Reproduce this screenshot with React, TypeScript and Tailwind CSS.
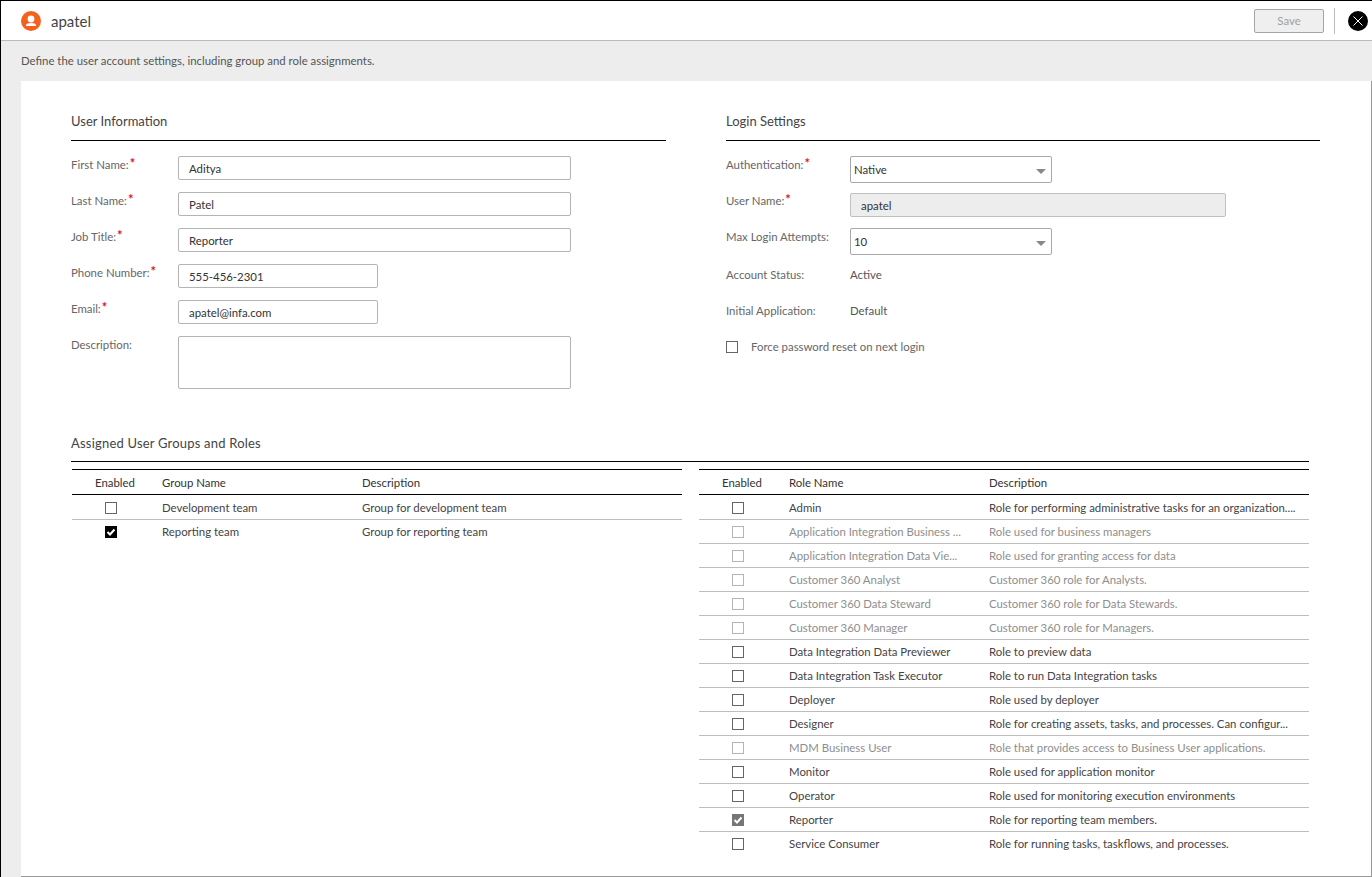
const font = { fontFamily: '"Lato", "Open Sans", sans-serif' };

const groups = [
  { name: "Development team", description: "Group for development team", state: "off" },
  { name: "Reporting team", description: "Group for reporting team", state: "on" },
];

const roles = [
  { name: "Admin", description: "Role for performing administrative tasks for an organization....", state: "off" },
  { name: "Application Integration Business ...", description: "Role used for business managers", state: "dim" },
  { name: "Application Integration Data Vie...", description: "Role used for granting access for data", state: "dim" },
  { name: "Customer 360 Analyst", description: "Customer 360 role for Analysts.", state: "dim" },
  { name: "Customer 360 Data Steward", description: "Customer 360 role for Data Stewards.", state: "dim" },
  { name: "Customer 360 Manager", description: "Customer 360 role for Managers.", state: "dim" },
  { name: "Data Integration Data Previewer", description: "Role to preview data", state: "off" },
  { name: "Data Integration Task Executor", description: "Role to run Data Integration tasks", state: "off" },
  { name: "Deployer", description: "Role used by deployer", state: "off" },
  { name: "Designer", description: "Role for creating assets, tasks, and processes. Can configur...", state: "off" },
  { name: "MDM Business User", description: "Role that provides access to Business User applications.", state: "dim" },
  { name: "Monitor", description: "Role used for application monitor", state: "off" },
  { name: "Operator", description: "Role used for monitoring execution environments", state: "off" },
  { name: "Reporter", description: "Role for reporting team members.", state: "locked" },
  { name: "Service Consumer", description: "Role for running tasks, taskflows, and processes.", state: "off" },
];

function Check({ state }: { state: string }) {
  if (state === "on" || state === "locked") {
    return (
      <span className={`flex h-3 w-3 items-center justify-center ${state === "on" ? "bg-black" : "bg-[#767676]"}`}>
        <svg viewBox="0 0 12 12" className="h-3 w-3">
          <path d="M2.5 6 L5 8.5 L9.5 3.5" fill="none" stroke="white" strokeWidth="2" />
        </svg>
      </span>
    );
  }
  return <span className={`block h-3 w-3 border bg-white ${state === "dim" ? "border-[#b5b5b5]" : "border-[#666]"}`} />;
}

function Required() {
  return <span className="relative top-[-1px] ml-[1px] text-[13px] font-bold leading-[10px] text-[#d8152a]">*</span>;
}

function TextField({ label, value, width, required }: { label: string; value: string; width: string; required?: boolean }) {
  return (
    <div className="flex h-[36px] items-start">
      <div className="w-[107px] shrink-0 pt-[1px] text-[#666]">
        {label}
        {required && <Required />}
      </div>
      <div className={`flex h-[24px] items-center rounded-[2px] border border-[#b4b4b4] px-[10px] pt-[2px] text-[#333] ${width}`}>{value}</div>
    </div>
  );
}

function SelectRow({ label, value, required }: { label: string; value: string; required?: boolean }) {
  return (
    <div className="flex h-[36px] items-start">
      <div className="w-[124px] shrink-0 pt-[1px] text-[#666]">
        {label}
        {required && <Required />}
      </div>
      <div className="flex h-[27px] w-[202px] items-center justify-between rounded-[2px] border border-[#a8a8a8] pl-[3px] pr-[5px] text-[#333]">
        {value}
        <span className="mt-[3px] h-0 w-0 border-x-[5px] border-t-[5px] border-x-transparent border-t-[#888]" />
      </div>
    </div>
  );
}

function InfoRow({ label, value }: { label: string; value: string }) {
  return (
    <div className="flex h-[36px] items-start pt-[3px] text-[#666]">
      <div className="w-[124px] shrink-0">{label}</div>
      <div className="text-[#555]">{value}</div>
    </div>
  );
}

function DataTable({ nameLabel, rows, className }: { nameLabel: string; rows: { name: string; description: string; state: string }[]; className?: string }) {
  return (
    <div className={`w-[610px] ${className ?? ""}`}>
      <div className="mb-[1px] flex h-[26px] items-center border-y border-black pt-[1px] text-[#333]">
        <div className="flex w-[90px] shrink-0 justify-center pr-[4px]">Enabled</div>
        <div className="w-[200px] shrink-0">{nameLabel}</div>
        <div>Description</div>
      </div>
      {rows.map((row, i) => (
        <div key={row.name} className={`flex h-[24px] items-center ${i < rows.length - 1 ? "border-b border-[#bdbdbd]" : ""} ${row.state === "dim" ? "text-[#8e8e8e]" : "text-[#444]"}`}>
          <div className="flex w-[90px] shrink-0 justify-center pr-[12px]">
            <Check state={row.state} />
          </div>
          <div className="w-[200px] shrink-0 whitespace-nowrap pr-2">{row.name}</div>
          <div className="whitespace-nowrap">{row.description}</div>
        </div>
      ))}
    </div>
  );
}

export default function App() {
  return (
    <div style={font} className="flex h-[877px] w-[1372px] flex-col overflow-hidden border-l border-t border-black bg-[#ededed] text-[11.4px] leading-[16px]">
      <header className="flex h-[40px] shrink-0 items-center justify-between border-b border-[#bbbbbb] bg-white pl-[20px] pr-[4px]">
        <div className="flex items-center gap-[10px]">
          <span className="flex h-[20px] w-[20px] items-center justify-center rounded-full bg-[#f4611e]">
            <svg viewBox="0 0 20 20" className="h-[20px] w-[20px]" fill="white">
              <circle cx="10" cy="8" r="3.4" />
              <path d="M4.8 15 C5 12.6 7 12 10 12 C13 12 15 12.6 15.2 15 Z" />
            </svg>
          </span>
          <span className="text-[15px] text-[#444]">apatel</span>
        </div>
        <div className="flex items-center">
          <button className="h-[24px] w-[70px] rounded-[2px] border border-[#a5a5a5] bg-[#efefef] text-[11.4px] text-[#a0a0a0]">Save</button>
          <span className="ml-[10px] mr-[13px] h-[26px] w-px bg-[#bbbbbb]" />
          <span className="flex h-[20px] w-[20px] items-center justify-center rounded-full bg-black">
            <svg viewBox="0 0 20 20" className="h-[20px] w-[20px]" stroke="white" strokeWidth="1">
              <path d="M5.5 5.5 L14.5 14.5 M14.5 5.5 L5.5 14.5" />
            </svg>
          </span>
        </div>
      </header>
      <div className="flex h-[40px] shrink-0 items-center pl-[20px] pb-[1px] text-[#555]">Define the user account settings, including group and role assignments.</div>
      <main className="ml-[20px] flex-1 border-b border-r border-[#999] bg-white pl-[50px] pr-[50px]">
        <div className="flex gap-[60px] pt-[30px]">
          <section className="w-[595px] shrink-0">
            <h2 className="flex h-[30px] items-start border-b border-black pt-[2px] text-[13px] font-normal text-[#444]">User Information</h2>
            <div className="pt-[15px]">
              <TextField label="First Name:" value="Aditya" width="w-[393px]" required />
              <TextField label="Last Name:" value="Patel" width="w-[393px]" required />
              <TextField label="Job Title:" value="Reporter" width="w-[393px]" required />
              <TextField label="Phone Number:" value="555-456-2301" width="w-[200px]" required />
              <TextField label="Email:" value="apatel@infa.com" width="w-[200px]" required />
              <div className="flex items-start">
                <div className="w-[107px] shrink-0 pt-[1px] text-[#666]">Description:</div>
                <div className="h-[53px] w-[393px] rounded-[2px] border border-[#b4b4b4]" />
              </div>
            </div>
          </section>
          <section className="w-[594px] shrink-0">
            <h2 className="flex h-[30px] items-start border-b border-black pt-[2px] text-[13px] font-normal text-[#444]">Login Settings</h2>
            <div className="pt-[15px]">
              <SelectRow label="Authentication:" value="Native" required />
              <div className="flex h-[36px] items-start pt-[1px]">
                <div className="w-[124px] shrink-0 text-[#666]">
                  User Name:
                  <Required />
                </div>
                <div className="flex h-[24px] w-[376px] items-center rounded-[2px] border border-[#c0c0c0] bg-[#ededed] px-[10px] pt-[2px] text-[#333]">apatel</div>
              </div>
              <SelectRow label="Max Login Attempts:" value="10" />
              <InfoRow label="Account Status:" value="Active" />
              <InfoRow label="Initial Application:" value="Default" />
              <div className="flex h-[36px] items-start gap-[13px] pt-[3px] text-[#666]">
                <span className="mt-[2px]">
                  <Check state="off" />
                </span>
                Force password reset on next login
              </div>
            </div>
          </section>
        </div>
        <h2 className="mt-[46px] flex h-[27px] w-[1238px] items-start border-b border-black text-[13px] font-normal tracking-[0.2px] text-[#444]">Assigned User Groups and Roles</h2>
        <div className="flex w-[1238px] justify-between pt-[7px]">
          <DataTable className="ml-[1px]" nameLabel="Group Name" rows={groups} />
          <DataTable nameLabel="Role Name" rows={roles} />
        </div>
      </main>
    </div>
  );
}
